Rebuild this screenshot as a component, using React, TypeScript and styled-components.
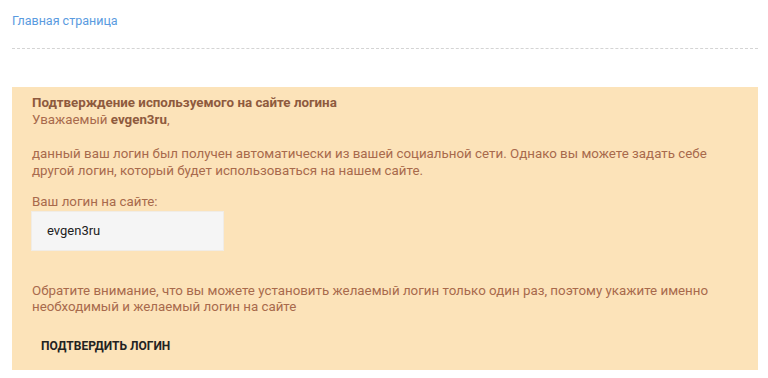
import React from "react";
import styled, { createGlobalStyle } from "styled-components";

const GlobalStyle = createGlobalStyle`
  body {
    margin: 0;
    background: #fff;
    font-family: Roboto, "Liberation Sans", sans-serif;
  }
`;

const Page = styled.div`
  display: flex;
  flex-direction: column;
  padding: 12px 10px 10px 12px;
`;

const Breadcrumbs = styled.nav`
  padding-bottom: 19px;
  border-bottom: 1px dashed #d4d4d4;
  line-height: 16px;
`;

const CrumbLink = styled.a`
  font-size: 12.5px;
  color: #5a9be0;
  text-decoration: none;
`;

const Notice = styled.div`
  margin-top: 38px;
  padding: 8px 20px 6px;
  background: #fce3b9;
  color: #a86a4c;
  font-size: 13.33px;
  line-height: 16.5px;
`;

const Title = styled.div`
  font-weight: 700;
  color: #8e5a3e;
`;

const Strong = styled.b`
  color: #8e5a3e;
`;

const Paragraph = styled.p<{ $gap?: number }>`
  margin: ${({ $gap }) => $gap ?? 18}px 0 0;
`;

const FieldLabel = styled.label`
  display: block;
  margin-top: 15px;
`;

const LoginInput = styled.input`
  display: block;
  box-sizing: border-box;
  width: 193px;
  height: 40px;
  margin: 0 0 0 -1px;
  padding: 0 15px;
  border: 1px solid #f0ece6;
  background: #f5f5f5;
  font-family: Roboto, "Liberation Sans", sans-serif;
  font-size: 13px;
  color: #222;
  outline: none;
`;

const ConfirmButton = styled.button`
  display: block;
  margin-top: 12px;
  padding: 10px 9px;
  border: none;
  background: transparent;
  font-family: Roboto, "Liberation Sans", sans-serif;
  font-size: 12px;
  line-height: 16px;
  font-weight: 700;
  text-transform: uppercase;
  color: #222;
  cursor: pointer;
`;

const App = () => {
  return (
    <Page>
      <GlobalStyle />
      <Breadcrumbs>
        <CrumbLink href="#">Главная страница</CrumbLink>
      </Breadcrumbs>
      <Notice>
        <Title>Подтверждение используемого на сайте логина</Title>
        <div>
          Уважаемый <Strong>evgen3ru</Strong>,
        </div>
        <Paragraph>
          данный ваш логин был получен автоматически из вашей социальной сети.
          Однако вы можете задать себе другой логин, который будет
          использоваться на нашем сайте.
        </Paragraph>
        <FieldLabel htmlFor="login">Ваш логин на сайте:</FieldLabel>
        <LoginInput id="login" defaultValue="evgen3ru" />
        <Paragraph $gap={32}>
          Обратите внимание, что вы можете установить желаемый логин только
          один раз, поэтому укажите именно необходимый и желаемый логин на
          сайте
        </Paragraph>
        <ConfirmButton type="button">Подтвердить логин</ConfirmButton>
      </Notice>
    </Page>
  );
};

export default App;
